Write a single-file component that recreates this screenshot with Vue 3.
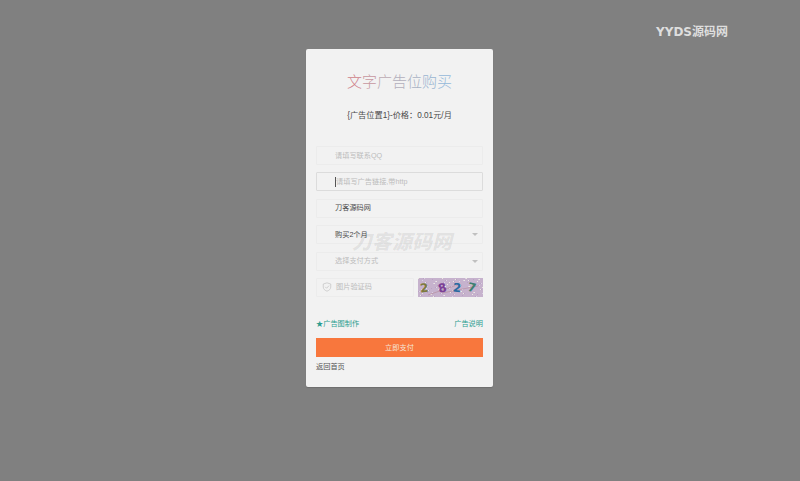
<script setup>
const titleChars = [
  { t: '文', c: '#cf7f8a' },
  { t: '字', c: '#c797a0' },
  { t: '广', c: '#bcaab2' },
  { t: '告', c: '#b2afbc' },
  { t: '位', c: '#a9b2c4' },
  { t: '购', c: '#9ab5d1' },
  { t: '买', c: '#95b9da' },
];

// 验证码上的噪点
const dots = [];
for (let i = 0; i < 110; i++) {
  dots.push({
    id: i,
    x: (i * 37) % 65,
    y: (i * 23 + (i % 5) * 3) % 19,
    fill: i % 3 === 0 ? '#ece9e0' : i % 3 === 1 ? '#dcd2e4' : '#b9a2c3',
  });
}
const digits = [
  { t: '2', x: 2, r: -6, c: '#7d7a3c' },
  { t: '8', x: 20, r: -14, c: '#7b3f95' },
  { t: '2', x: 35, r: 6, c: '#2a6aa0' },
  { t: '7', x: 50, r: 12, c: '#3f7f70' },
];
</script>

<template>
  <div class="page">
    <header class="top">
      <span class="logo">YYDS源码网</span>
    </header>
    <main class="card">
      <h1 class="title">
        <span v-for="ch in titleChars" :key="ch.t" :style="{ color: ch.c }">{{ ch.t }}</span>
      </h1>
      <p class="price">{广告位置1}-价格：0.01元/月</p>

      <div class="fields">
        <div class="field"><span class="ph">请填写联系QQ</span></div>
        <div class="field focus"><i class="caret"></i><span class="ph">请填写广告链接,带http</span></div>
        <div class="field"><span class="val">刀客源码网</span></div>
        <div class="field"><span class="val">购买2个月</span><i class="arrow"></i></div>
        <div class="field"><span class="ph">选择支付方式</span><i class="arrow"></i></div>
        <div class="code-row">
          <div class="field code">
            <svg class="shield" viewBox="0 0 12 12" width="10" height="10" fill="none" stroke="#c4c4c4" stroke-width="0.9">
              <path d="M6 1 L10.5 2.4 V6 C10.5 8.6 8.2 10.3 6 11 C3.8 10.3 1.5 8.6 1.5 6 V2.4 Z" />
              <path d="M3.8 5.8 L5.5 7.5 L8.4 4.4" />
            </svg>
            <span class="ph">图片验证码</span>
          </div>
          <svg class="captcha" viewBox="0 0 65 19" width="65" height="19">
            <rect width="65" height="19" fill="#c6b2cd" />
            <rect v-for="d in dots" :key="d.id" :x="d.x" :y="d.y" width="1" height="1" :fill="d.fill" />
            <path d="M10 17 L42 6 M24 15 L60 8" stroke="#b0808c" stroke-width="0.5" fill="none" />
            <text
              v-for="(n, i) in digits"
              :key="i"
              :x="n.x"
              y="14"
              :fill="n.c"
              :transform="`rotate(${n.r} ${n.x + 5} 9)`"
              class="digit"
            >{{ n.t }}</text>
          </svg>
        </div>
      </div>

      <div class="links">
        <a class="link">★广告图制作</a>
        <a class="link">广告说明</a>
      </div>
      <button class="pay">立即支付</button>
      <a class="back">返回首页</a>

      <div class="mark">刀客源码网</div>
    </main>
  </div>
</template>

<style>
html, body {
  margin: 0;
  background: #808080;
}
</style>

<style scoped>
.page {
  width: 800px;
  height: 481px;
  overflow: hidden;
  background: #808080;
  font-family: "Liberation Sans", "Noto Sans CJK SC", sans-serif;
  font-size: 7.2px;
}
.top {
  height: 49px;
  box-sizing: border-box;
  padding: 25px 72px 0 0;
  display: flex;
  justify-content: flex-end;
}
.logo {
  font-family: "DejaVu Sans", "Noto Sans CJK SC", sans-serif;
  font-size: 12px;
  line-height: 15px;
  font-weight: 700;
  color: #dedede;
}
.card {
  position: relative;
  width: 187px;
  height: 338px;
  margin-left: 306px;
  box-sizing: border-box;
  padding: 0 10px;
  background: #f2f2f2;
  border-radius: 2px;
  box-shadow: 0 1px 1px rgba(0, 0, 0, 0.15);
}
.title {
  margin: 0;
  padding-top: 23px;
  text-align: center;
  font-size: 15px;
  line-height: 20px;
  font-weight: 300;
}
.price {
  margin: 18px 0 0;
  text-align: center;
  font-size: 8.2px;
  line-height: 12px;
  color: #4a4a4a;
}
.fields {
  margin-top: 24px;
  display: flex;
  flex-direction: column;
  gap: 7.4px;
}
.field {
  position: relative;
  height: 19px;
  box-sizing: border-box;
  display: flex;
  align-items: center;
  padding-left: 18px;
  border: 1px solid #ececec;
  border-radius: 1px;
  line-height: 12px;
}
.field.focus {
  border-color: #dcdcdc;
}
.ph {
  color: #bcbcbc;
}
.val {
  color: #4a4a4a;
}
.caret {
  width: 1px;
  height: 10px;
  background: #555;
}
.arrow {
  position: absolute;
  right: 4px;
  top: 7px;
  border-style: solid;
  border-width: 3px 3px 0;
  border-color: #c0c0c0 transparent transparent;
}
.code-row {
  display: flex;
  justify-content: space-between;
}
.code {
  width: 98px;
  padding-left: 5px;
  gap: 4px;
}
.shield {
  display: block;
  flex: none;
}
.captcha {
  display: block;
}
.digit {
  font-family: "DejaVu Sans", sans-serif;
  font-size: 12px;
  font-weight: 700;
}
.links {
  margin-top: 21px;
  display: flex;
  justify-content: space-between;
  line-height: 12px;
}
.link {
  color: #2a9d8f;
}
.pay {
  display: block;
  width: 100%;
  height: 19px;
  margin-top: 8px;
  padding: 0;
  border: none;
  background: #f8773d;
  color: #f6e6da;
  font-family: inherit;
  font-size: 7.2px;
}
.back {
  display: block;
  margin-top: 4px;
  line-height: 12px;
  color: #555;
}
.mark {
  position: absolute;
  left: 46px;
  top: 181px;
  font-size: 20px;
  line-height: 24px;
  font-weight: 900;
  font-style: italic;
  color: rgba(0, 0, 0, 0.07);
  pointer-events: none;
}
</style>
